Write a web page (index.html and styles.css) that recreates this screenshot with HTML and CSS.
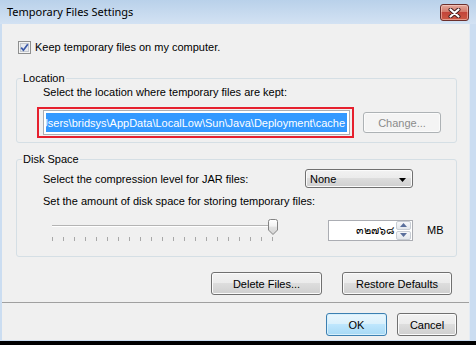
FILE: index.html
```html
<!DOCTYPE html>
<html lang="en">
<head>
    <meta charset="UTF-8">
    <meta name="viewport" content="width=device-width, initial-scale=1.0">
    <title>Temporary Files Settings</title>
    <link rel="stylesheet" href="styles.css">
</head>
<body>
    <div class="window">
        <div class="titlebar">
            <span class="title">Temporary Files Settings</span>
            <button type="button" class="close" aria-label="Close">
                <svg width="13" height="10" viewBox="0 0 13 10">
                    <path d="M2.5 1.5 L10.5 8.5 M10.5 1.5 L2.5 8.5" stroke="#3c1a1a" stroke-width="4" stroke-linecap="round"/>
                    <path d="M2.5 1.5 L10.5 8.5 M10.5 1.5 L2.5 8.5" stroke="#ffffff" stroke-width="2.2" stroke-linecap="round"/>
                </svg>
            </button>
        </div>

        <div class="client">
            <div class="content">
                <label class="check-row">
                    <span class="checkbox">
                        <svg width="13" height="13" viewBox="0 0 13 13">
                            <rect x="0.5" y="0.5" width="12" height="12" fill="#f4f4f4" stroke="#8e8f8f"/>
                            <rect x="2.5" y="2.5" width="8" height="8" fill="#e6e9ee" stroke="#c3c8cf"/>
                            <path d="M3.2 6.6 L5.4 9.2 L9.8 3.2" fill="none" stroke="#3a58a8" stroke-width="1.7"/>
                        </svg>
                    </span>
                    Keep temporary files on my computer.
                </label>

                <fieldset class="group">
                    <legend>Location</legend>
                    <p class="line">Select the location where temporary files are kept:</p>
                    <div class="path-row">
                        <div class="highlight">
                            <div class="path-field">
                                <div class="selection">
                                    <span>C:\Users\bridsys\AppData\LocalLow\Sun\Java\Deployment\cache</span>
                                </div>
                            </div>
                        </div>
                        <button type="button" class="btn change" disabled>Change...</button>
                    </div>
                </fieldset>

                <fieldset class="group disk">
                    <legend>Disk Space</legend>
                    <div class="combo-row">
                        <span class="combo-label">Select the compression level for JAR files:</span>
                        <div class="combo">
                            <span>None</span>
                            <svg width="7" height="4" viewBox="0 0 7 4"><path d="M0 0 H7 L3.5 4 Z" fill="#000"/></svg>
                        </div>
                    </div>
                    <p class="line amount">Set the amount of disk space for storing temporary files:</p>
                    <div class="slider-row">
                        <svg class="slider" width="240" height="22" viewBox="0 0 240 22">
                            <rect x="6" y="6" width="222" height="1" fill="#b4b4b4"/>
                            <rect x="6" y="7" width="222" height="1" fill="#ffffff"/>
                            <g fill="#a8a8a8">
                                <rect x="6" y="18" width="1" height="4"/>
                                <rect x="17" y="18" width="1" height="4"/>
                                <rect x="28" y="18" width="1" height="4"/>
                                <rect x="39" y="18" width="1" height="4"/>
                                <rect x="50" y="18" width="1" height="4"/>
                                <rect x="61" y="18" width="1" height="4"/>
                                <rect x="72" y="18" width="1" height="4"/>
                                <rect x="83" y="18" width="1" height="4"/>
                                <rect x="94" y="18" width="1" height="4"/>
                                <rect x="105" y="18" width="1" height="4"/>
                                <rect x="116" y="18" width="1" height="4"/>
                                <rect x="127" y="18" width="1" height="4"/>
                                <rect x="138" y="18" width="1" height="4"/>
                                <rect x="149" y="18" width="1" height="4"/>
                                <rect x="160" y="18" width="1" height="4"/>
                                <rect x="171" y="18" width="1" height="4"/>
                                <rect x="182" y="18" width="1" height="4"/>
                                <rect x="193" y="18" width="1" height="4"/>
                                <rect x="204" y="18" width="1" height="4"/>
                                <rect x="215" y="18" width="1" height="4"/>
                                <rect x="226" y="18" width="1" height="4"/>
                            </g>
                            <defs>
                                <linearGradient id="thumb" x1="0" y1="0" x2="0" y2="1">
                                    <stop offset="0" stop-color="#ffffff"/>
                                    <stop offset="0.45" stop-color="#f2f2f2"/>
                                    <stop offset="0.5" stop-color="#e2e2e2"/>
                                    <stop offset="1" stop-color="#d4d4d4"/>
                                </linearGradient>
                            </defs>
                            <path d="M222.5 2.5 Q222.5 0.5 224.5 0.5 H229.5 Q231.5 0.5 231.5 2.5 V11 L227 15.5 L222.5 11 Z" fill="url(#thumb)" stroke="#838383"/>
                        </svg>
                        <div class="spinner">
                            <span class="value">๓๒๗๖๘</span>
                            <div class="spin-buttons">
                                <span class="spin up"><svg width="7" height="4" viewBox="0 0 7 4"><path d="M3.5 0 L7 4 H0 Z" fill="#5a6f9c"/></svg></span>
                                <span class="spin down"><svg width="7" height="4" viewBox="0 0 7 4"><path d="M0 0 H7 L3.5 4 Z" fill="#5a6f9c"/></svg></span>
                            </div>
                        </div>
                        <span class="unit">MB</span>
                    </div>
                </fieldset>

                <div class="actions">
                    <button type="button" class="btn delete">Delete Files...</button>
                    <button type="button" class="btn restore">Restore Defaults</button>
                </div>
            </div>

            <div class="footer">
                <button type="button" class="btn default ok">OK</button>
                <button type="button" class="btn cancel">Cancel</button>
            </div>
        </div>
    </div>
</body>
</html>
```

FILE: styles.css
```css
* {
    box-sizing: border-box;
}
body {
    margin: 0;
    background-color: #000;
    font-family: "Liberation Sans", Arial, sans-serif;
    font-size: 11px;
    color: #000;
}
.window {
    width: 476px;
    height: 341px;
    display: flex;
    flex-direction: column;
    padding: 0 6px 1px 2px;
    background: linear-gradient(#b9d1ea, #d3e2f3 24px, #cbddf1 24px);
}
.titlebar {
    height: 24px;
    display: flex;
    align-items: center;
    justify-content: space-between;
    padding-left: 5px;
}
.title {
    font-family: "Noto Sans", "Liberation Sans", sans-serif;
    font-size: 11px;
    margin-top: -1px;
}
.close {
    width: 29px;
    height: 17px;
    margin: 1px 1px 0 0;
    padding: 0;
    display: flex;
    align-items: center;
    justify-content: center;
    border: 1px solid #6b2f2c;
    border-radius: 3px;
    background: linear-gradient(#e3a99c, #d47a6b 45%, #c3453a 50%, #cc5a45);
    box-shadow: inset 0 0 0 1px rgba(255, 220, 210, 0.5);
}

.client {
    flex: 1;
    display: flex;
    flex-direction: column;
    background-color: #f0f0f0;
    border-right: 1px solid #e4ebf4;
}
.content {
    padding: 17px 12px 0 14px;
}
.check-row {
    display: flex;
    align-items: center;
    gap: 4px;
    height: 13px;
    line-height: 13px;
    margin-left: 2px;
}
.checkbox {
    display: block;
    width: 13px;
    height: 13px;
}
.checkbox svg {
    display: block;
}

.group {
    margin: 18px 0 0;
    padding: 1px 0 4px 26px;
    border: 1px solid #d5dfe5;
    border-radius: 3px;
}
.group legend {
    margin-left: -21px;
    padding: 0 1px;
    line-height: 13px;
}
.group.disk {
    margin-top: 10px;
    padding-bottom: 15px;
}
.line {
    margin: 0;
    line-height: 13px;
}

.path-row {
    display: flex;
    align-items: center;
    margin-top: 8px;
}
.highlight {
    margin-left: -6px;
    padding: 1px 2px 1px 4px;
    border: 2px solid #e6202e;
}
.path-field {
    width: 307px;
    height: 25px;
    padding: 2px;
    border: 1px solid #abadb3;
    background-color: #fff;
}
.selection {
    height: 100%;
    display: flex;
    align-items: center;
    justify-content: flex-end;
    overflow: hidden;
    padding-right: 2px;
    background-color: #3399ff;
    color: #fff;
    white-space: nowrap;
    font-size: 11px;
}

.btn {
    height: 23px;
    padding: 0;
    font-family: inherit;
    font-size: 11px;
    color: #000;
    border: 1px solid #707070;
    border-radius: 3px;
    background: linear-gradient(#f2f2f2, #ebebeb 49%, #dddddd 50%, #cfcfcf);
    box-shadow: inset 0 0 0 1px #fbfbfb;
}
.btn.change {
    width: 78px;
    height: 21px;
    margin-left: 9px;
    color: #8b8b8b;
    border-color: #adb2b5;
    background: #f4f4f4;
}
.btn.default {
    border-color: #3c7fb1;
    background: linear-gradient(#eaf6fd, #d9f0fc 49%, #bee6fd 50%, #a7d9f5);
    box-shadow: inset 0 0 0 1px #d7f0fc;
}

.combo-row {
    display: flex;
    align-items: center;
    margin-top: 2px;
}
.combo-label {
    width: 262px;
}
.combo {
    width: 108px;
    height: 19px;
    display: flex;
    align-items: center;
    justify-content: space-between;
    padding: 0 6px 0 4px;
    border: 1px solid #707070;
    border-radius: 3px;
    background: linear-gradient(#f2f2f2, #ebebeb 49%, #dddddd 50%, #cfcfcf);
    box-shadow: inset 0 0 0 1px #fbfbfb;
}
.combo svg {
    margin-top: 2px;
}
.line.amount {
    margin-top: 7px;
}

.slider-row {
    display: flex;
    align-items: center;
    margin-top: 11px;
    height: 22px;
}
.slider {
    display: block;
    margin-left: 3px;
    flex-shrink: 0;
}
.spinner {
    width: 85px;
    height: 21px;
    margin-left: 42px;
    display: flex;
    align-items: center;
    border: 1px solid #abadb3;
    background-color: #fff;
}
.spinner .value {
    flex: 1;
    text-align: right;
    padding-right: 2px;
    font-family: "Liberation Sans", "DejaVu Sans", sans-serif;
    font-size: 11px;
}
.spin-buttons {
    width: 15px;
    height: 19px;
    display: flex;
    flex-direction: column;
    gap: 1px;
    margin-right: 1px;
}
.spin {
    flex: 1;
    display: flex;
    align-items: center;
    justify-content: center;
    border: 1px solid #c8cdd4;
    border-radius: 2px;
    background: linear-gradient(#f7f8fa, #e3e7ec);
}
.spin svg {
    display: block;
}
.unit {
    margin-left: 14px;
}

.actions {
    display: flex;
    justify-content: flex-end;
    gap: 20px;
    margin-top: 15px;
    padding-right: 5px;
}
.btn.delete {
    width: 111px;
}
.btn.restore {
    width: 110px;
}

.footer {
    margin-top: auto;
    height: 38px;
    display: flex;
    justify-content: flex-end;
    gap: 10px;
    padding: 10px 12px 0 0;
    border-top: 1px solid #a0a0a0;
}
.btn.ok {
    width: 61px;
}
.btn.cancel {
    width: 60px;
}
```
